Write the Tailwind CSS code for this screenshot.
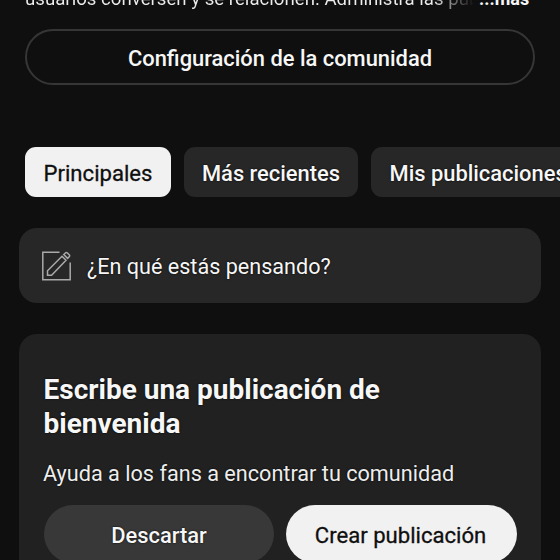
<!DOCTYPE html>
<html lang="es">
<head>
<meta charset="utf-8">
<title>Comunidad</title>
<script src="https://cdn.jsdelivr.net/npm/@tailwindcss/browser@4"></script>
</head>
<body class="w-[560px] h-[560px] overflow-hidden bg-[#0f0f0f] font-['Roboto',sans-serif] text-[21.9px] leading-[26px] text-[#f7f7f7] whitespace-nowrap">
<main class="w-[560px] h-[560px] overflow-hidden flex flex-col">
  <div class="h-[29px] shrink-0 pl-[25px] flex items-start">
    <p class="-mt-[14px] w-[454px] shrink-0 overflow-hidden text-[18.65px] leading-[26px] bg-linear-to-r from-[#eeeeee] from-90% to-[#0f0f0f] to-99% bg-clip-text text-transparent"><span>usuarios conversen y se relacionen. Administra las pub</span></p>
    <span class="-mt-[14px] text-[18px] leading-[26px] font-bold">...más</span>
  </div>
  <button class="mx-[25px] h-[56px] shrink-0 rounded-full border-2 border-[#363636] font-medium flex items-center justify-center pt-[3px]"><span>Configuración de la comunidad</span></button>
  <nav class="mt-[62px] ml-[25px] flex shrink-0 gap-[13px] h-[50px] font-medium">
    <button class="w-[146px] shrink-0 rounded-[11px] bg-[#f1f1f1] pt-[1px] font-normal text-[22.1px] text-[#0f0f0f] [-webkit-text-stroke:0.3px_#0f0f0f]"><span>Principales</span></button>
    <button class="w-[174px] shrink-0 rounded-[11px] bg-[#272727] pt-[3px] text-shadow-[0_0_2px_#000]"><span>Más recientes</span></button>
    <button class="w-[214px] shrink-0 rounded-[11px] bg-[#272727] pl-[18.5px] pt-[3px] text-left text-shadow-[0_0_2px_#000]"><span>Mis publicaciones</span></button>
  </nav>
  <section class="mt-[31px] mx-[19px] h-[75px] shrink-0 rounded-[18px] bg-[#272727] flex items-center pl-[23px] pt-[1px]">
    <svg class="w-[29px] h-[30px] shrink-0" viewBox="0 0 29 30" fill="none" stroke="#aaa" stroke-width="1.5"><path d="M17.5 1.2H.8v27.6h27.4V11.5M5.5 24.2v-4.5L20 5.2l4 4L9.6 24.2zM21.8 3.6l1.6-1.6q1-1 2 0l1.8 1.8q1 1 0 2l-1.6 1.6z"/></svg>
    <span class="ml-[16px] pt-[2px] text-[21.6px] text-shadow-[0_0_2px_#000]">¿En qué estás pensando?</span>
  </section>
  <section class="mt-[31px] mx-[19px] h-[260px] shrink-0 rounded-t-[18px] bg-[#212121] px-[25px] pt-[39px]">
    <h2 class="-ml-[0.5px] text-[28px] leading-[34px] font-bold text-shadow-[0_0_2px_#000]"><span>Escribe una publicación de</span><br><span>bienvenida</span></h2>
    <p class="mt-[20px] -ml-px text-[21.65px] leading-[26px] text-[#eeeeee] text-shadow-[0_0_2px_#000]"><span>Ayuda a los fans a encontrar tu comunidad</span></p>
    <div class="mt-[18px] flex gap-[12px] font-medium">
      <button class="w-[230px] h-[58px] shrink-0 rounded-full bg-[#383838] pt-[4px] text-shadow-[0_0_2px_#000]"><span>Descartar</span></button>
      <button class="w-[231px] h-[58px] shrink-0 rounded-full bg-[#f1f1f1] pt-[2px] pr-[2px] font-normal text-[22.1px] text-[#0f0f0f] [-webkit-text-stroke:0.3px_#0f0f0f]"><span>Crear publicación</span></button>
    </div>
  </section>
</main>
</body>
</html>
